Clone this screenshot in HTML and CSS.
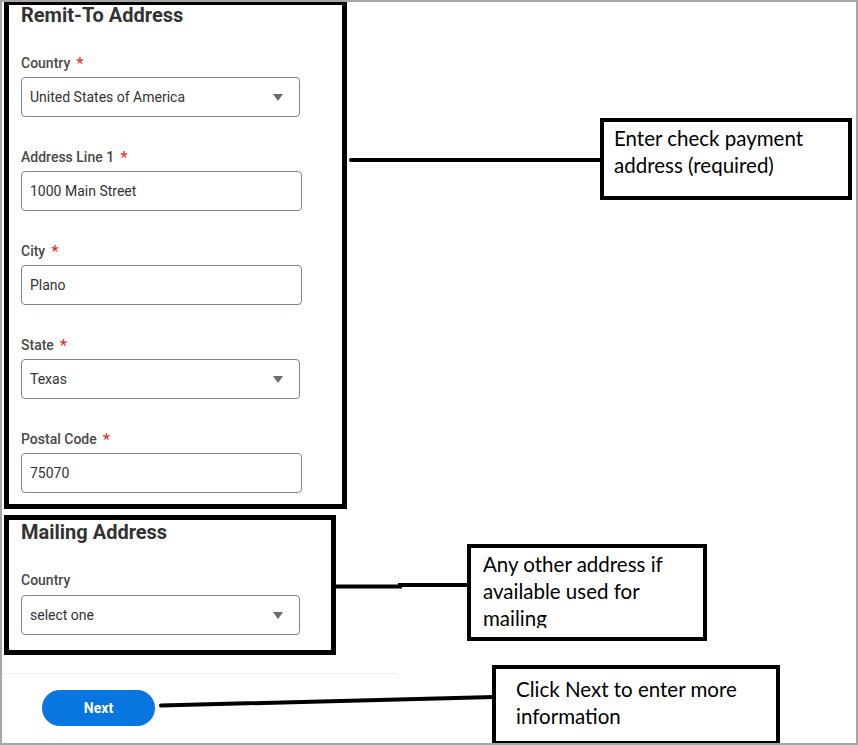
FILE: index.html
```html
<!DOCTYPE html>
<html lang="en">
<head>
<meta charset="utf-8">
<title>Remit-To Address</title>
<link rel="stylesheet" href="styles.css">
</head>
<body>
<div class="frame">
  <section class="box box-remit">
    <h2 class="section-title">Remit-To Address</h2>
    <div class="field">
      <div class="label">Country<span class="req">*</span></div>
      <div class="control select">United States of America<span class="caret"></span></div>
    </div>
    <div class="field">
      <div class="label">Address Line 1<span class="req">*</span></div>
      <div class="control text">1000 Main Street</div>
    </div>
    <div class="field">
      <div class="label">City<span class="req">*</span></div>
      <div class="control text">Plano</div>
    </div>
    <div class="field">
      <div class="label">State<span class="req">*</span></div>
      <div class="control select">Texas<span class="caret"></span></div>
    </div>
    <div class="field">
      <div class="label">Postal Code<span class="req">*</span></div>
      <div class="control text">75070</div>
    </div>
  </section>

  <section class="box box-mailing">
    <h2 class="section-title">Mailing Address</h2>
    <div class="field">
      <div class="label">Country</div>
      <div class="control select">select one<span class="caret"></span></div>
    </div>
  </section>

  <div class="divider"></div>
  <div class="actions">
    <button class="btn-next" type="button">Next</button>
  </div>

  <svg class="connectors" width="858" height="745" viewBox="0 0 858 745">
    <line x1="351" y1="160" x2="602" y2="160" stroke="#000" stroke-width="4" stroke-linecap="round"/>
    <polyline points="336,586.5 400,586.5 400,585 469,585" fill="none" stroke="#000" stroke-width="4"/>
    <line x1="161" y1="705.5" x2="494" y2="697" stroke="#000" stroke-width="4" stroke-linecap="round"/>
  </svg>

  <div class="callout callout-1"><div class="callout-text">Enter check payment address (required)</div></div>
  <div class="callout callout-2"><div class="callout-text">Any other address if available used for mailing</div></div>
  <div class="callout callout-3"><div class="callout-text">Click Next to enter more information</div></div>
</div>
</body>
</html>
```

FILE: styles.css
```css
* { box-sizing: border-box; }
html, body { margin: 0; padding: 0; background: #fff; }
body { font-family: Roboto, "Liberation Sans", sans-serif; }

.frame {
  position: relative;
  width: 858px;
  height: 745px;
  border: 2px solid #a6a6a6;
  overflow: hidden;
  background: #fff;
}

.box {
  border: 5px solid #000;
  padding-left: 12px;
}
.box-remit {
  margin: -1px 0 0 2px;
  width: 343px;
  height: 508px;
  border-top-width: 4px;
}
.box-mailing {
  margin: 6px 0 0 2px;
  width: 332px;
  height: 140px;
  padding-top: 2px;
}
.box-mailing .label { margin-bottom: 5px; }

.section-title {
  margin: 0 0 28px;
  font-size: 20px;
  line-height: 20px;
  font-weight: 700;
  color: #333;
}

.field + .field { margin-top: 30px; }

.label {
  font-size: 14px;
  line-height: 20px;
  font-weight: 500;
  color: #494949;
  margin-bottom: 4px;
  display: flex;
  align-items: flex-start;
}
.req {
  color: #de2e21;
  margin-left: 6px;
  font-size: 17px;
  line-height: 20px;
  font-weight: 400;
}

.control {
  position: relative;
  height: 40px;
  border: 1px solid #7b8590;
  border-radius: 4px;
  padding-left: 8px;
  display: flex;
  align-items: center;
  font-size: 14px;
  color: #333;
}
.control.select { width: 279px; }
.control.text { width: 281px; }

.caret {
  position: absolute;
  right: 16px;
  top: 16px;
  width: 0;
  height: 0;
  border-left: 5px solid transparent;
  border-right: 5px solid transparent;
  border-top: 7px solid #6b6b6b;
}

.divider {
  margin-top: 18px;
  width: 395px;
  height: 1px;
  background: #eceff1;
}

.actions {
  padding: 16px 0 0 40px;
}
.btn-next {
  width: 113px;
  height: 36px;
  border: 0;
  border-radius: 18px;
  background: #0875e1;
  color: #fff;
  font-family: Roboto, "Liberation Sans", sans-serif;
  font-size: 14px;
  font-weight: 700;
  padding: 0;
}

.connectors {
  position: absolute;
  left: -2px;
  top: -2px;
  pointer-events: none;
}

.callout {
  position: absolute;
  border: 4px solid #000;
  background: #fff;
  font-family: Lato, "Open Sans", sans-serif;
  font-size: 20.5px;
  line-height: 27px;
  color: #000;
  padding-left: 10px;
}
.callout-text {
  overflow: hidden;
}
.callout-1 {
  left: 598px; top: 116px; width: 252px; height: 82px;
  padding-top: 3px;
}
.callout-1 .callout-text { height: 51px; width: 210px; }
.callout-2 {
  left: 465px; top: 542px; width: 240px; height: 97px;
  padding-left: 12px; padding-top: 3px;
}
.callout-2 .callout-text { height: 77px; width: 210px; }
.callout-3 {
  left: 490px; top: 663px; width: 288px; height: 80px;
  padding-left: 20px; padding-top: 7px;
}
.callout-3 .callout-text { height: 60px; width: 255px; }
```
